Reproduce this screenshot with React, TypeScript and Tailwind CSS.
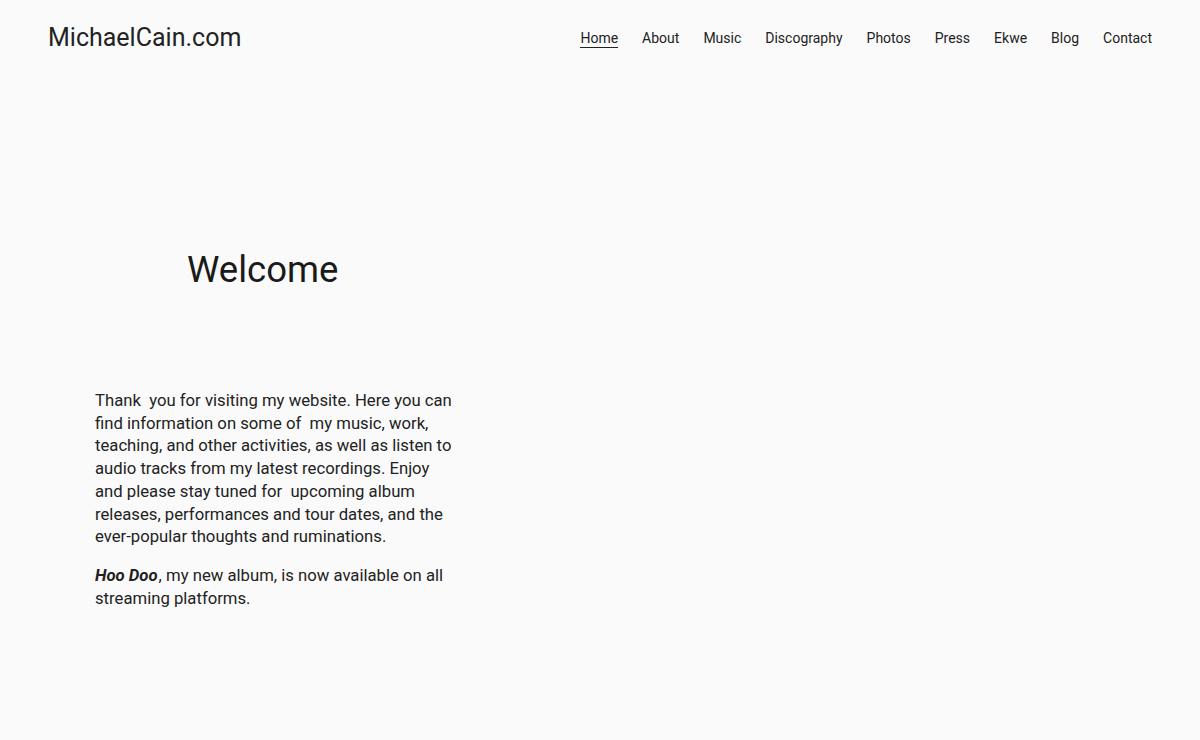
const NAV = ["Home", "About", "Music", "Discography", "Photos", "Press", "Ekwe", "Blog", "Contact"];

export default function App() {
  return (
    <div
      className="min-h-[740px] bg-[#fafafa] text-[#1a1a1a]"
      style={{ fontFamily: "Roboto, 'Noto Sans', sans-serif" }}
    >
      <header className="flex h-[76px] items-center justify-between px-12">
        <a className="text-[25px] leading-none text-[#222] -mt-[1px]">MichaelCain.com</a>
        <nav className="flex items-center gap-6 text-[14px] text-[#222]">
          {NAV.map((item) => (
            <a
              key={item}
              className={item === "Home" ? "border-b border-[#222] leading-[18px]" : "leading-[18px] border-b border-transparent"}
            >
              {item}
            </a>
          ))}
        </nav>
      </header>

      <main className="pl-[95px]">
        <h1 className="mt-[172px] pl-[92px] text-[36.5px] leading-[43px] text-[#1a1a1a]">Welcome</h1>
        <div className="mt-[99px] w-[360px] text-[16.7px] leading-[22.7px] text-[#222]">
          <p>
            Thank&nbsp; you for visiting my website. Here you can find information on some of&nbsp; my music, work,
            teaching, and other activities, as well as listen to audio tracks from my latest recordings. Enjoy and
            please stay tuned for&nbsp; upcoming album releases, performances and tour dates, and the ever-popular
            thoughts and ruminations.
          </p>
          <p className="mt-4">
            <em className="font-bold pr-[1px]">Hoo Doo</em>, my new album, is now available on all streaming platforms.
          </p>
        </div>
      </main>
    </div>
  );
}
